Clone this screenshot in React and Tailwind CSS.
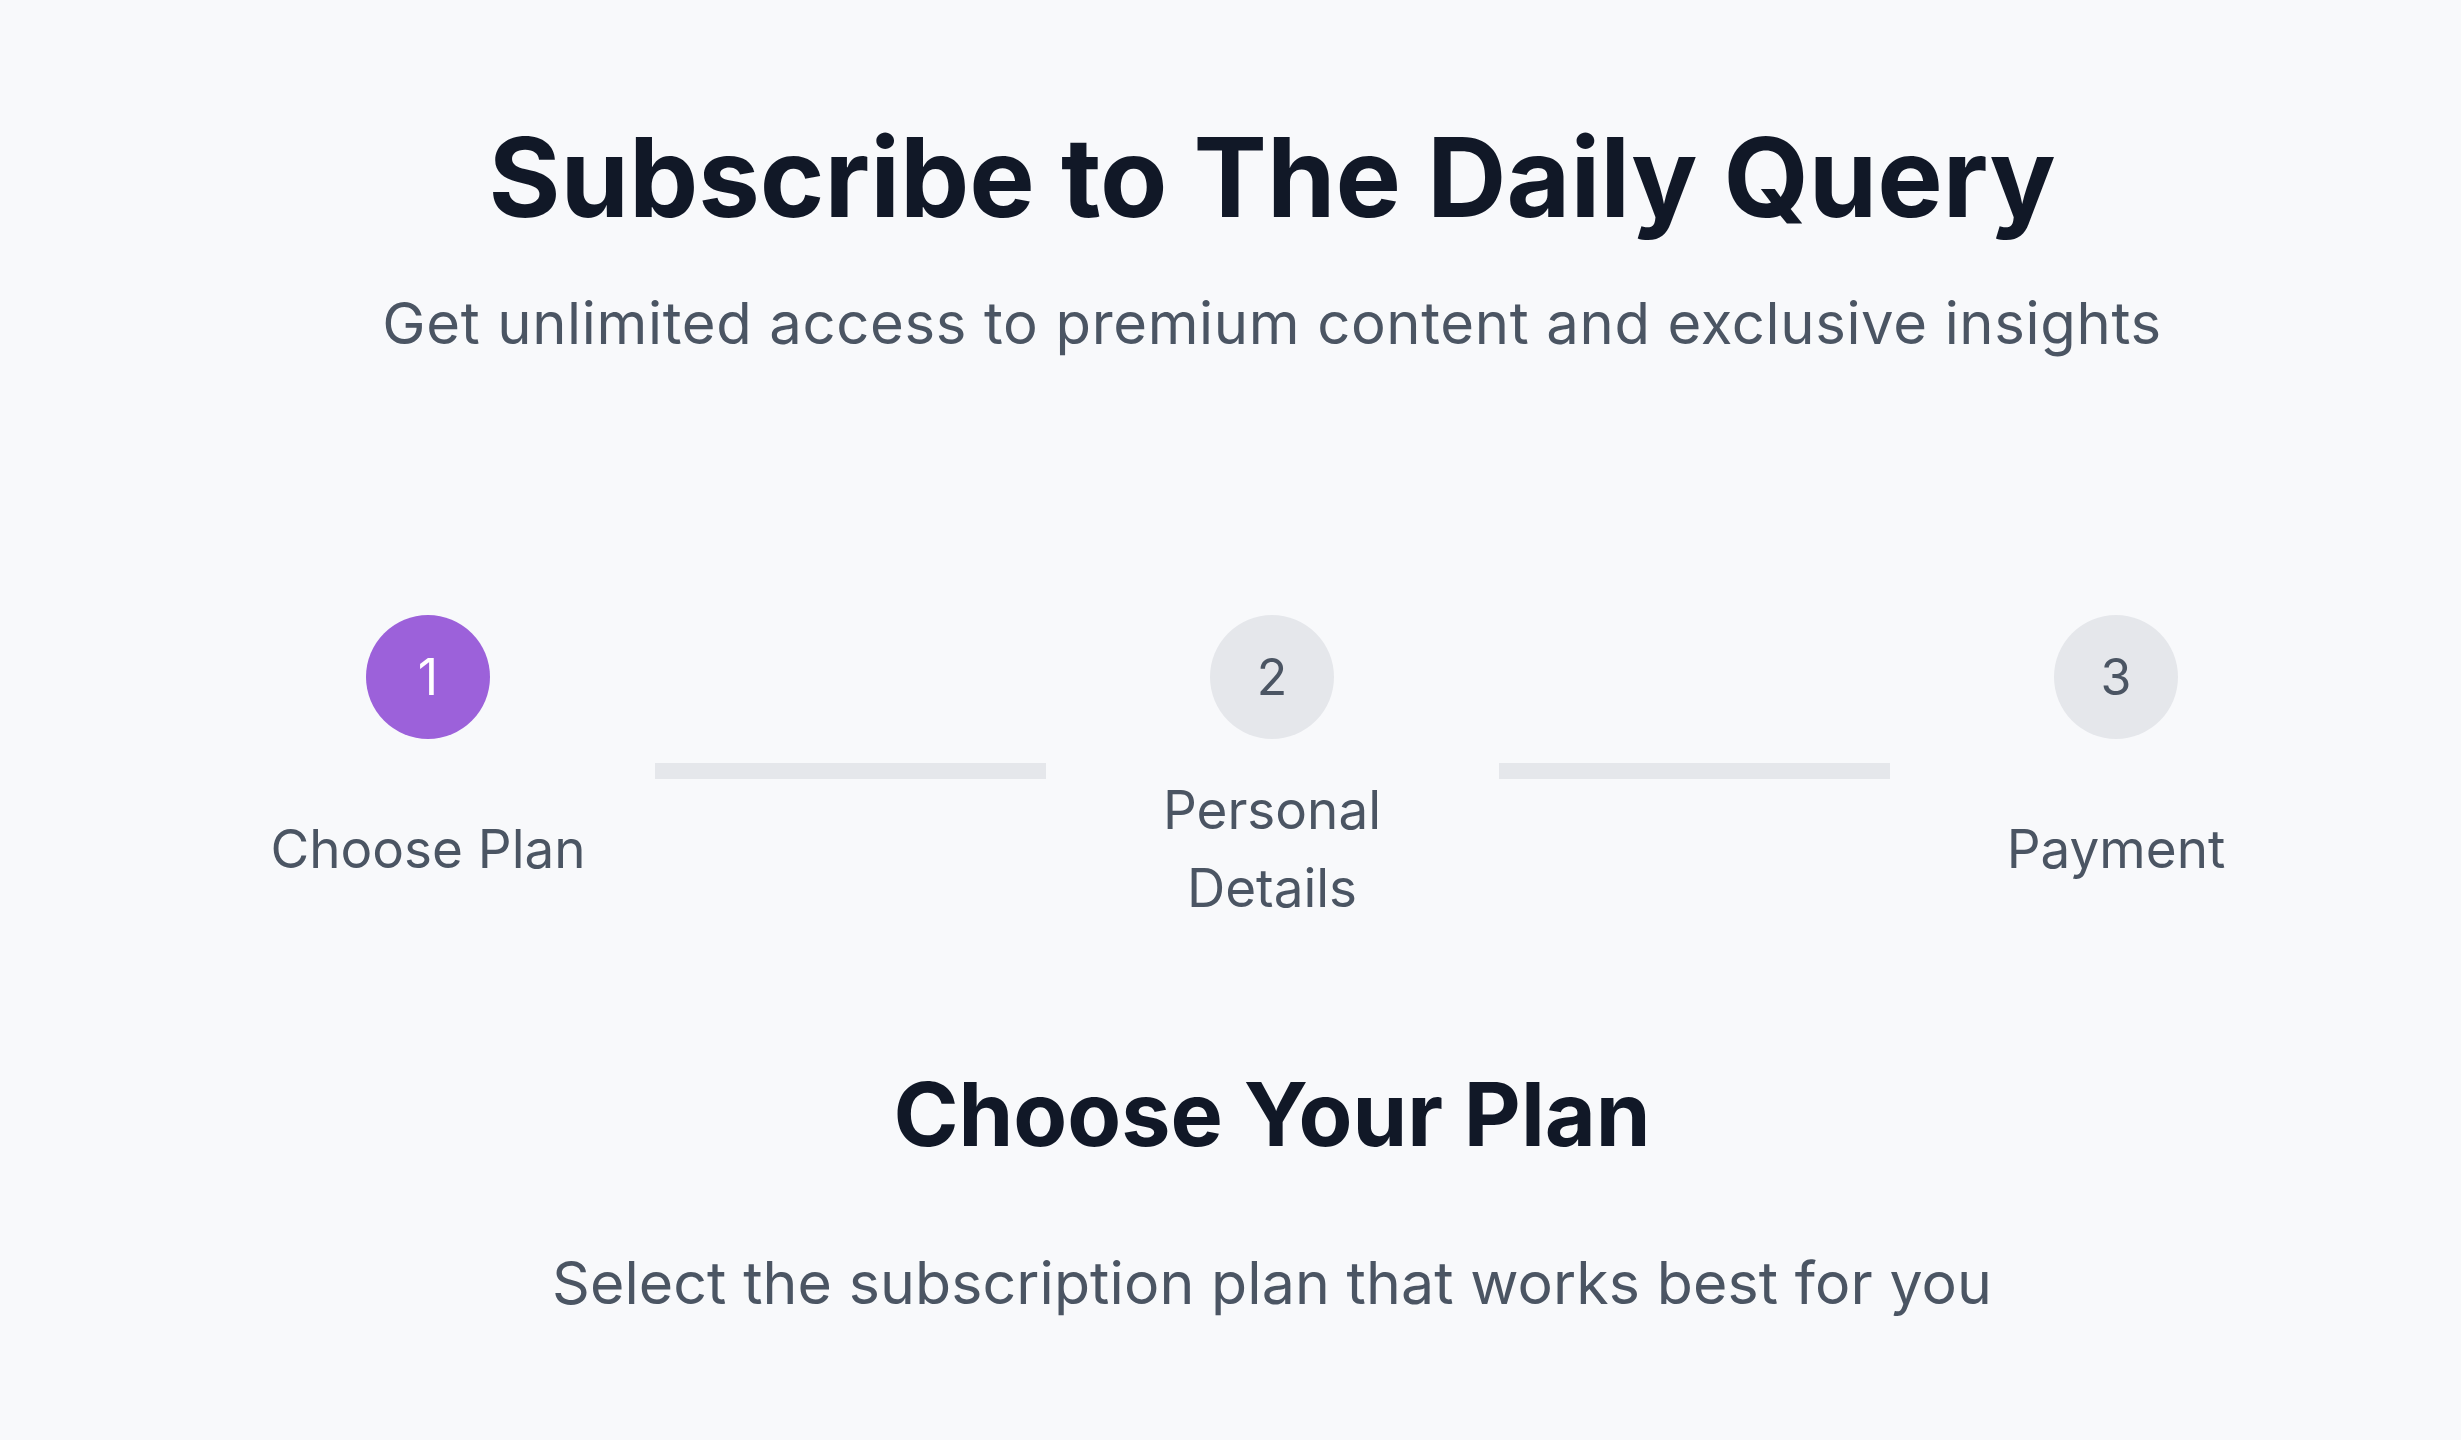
import React from "react";

const steps = [
  { n: "1", label: "Choose Plan", active: true },
  { n: "2", label: "Personal Details", active: false },
  { n: "3", label: "Payment", active: false },
];

function Step({ n, label, active }) {
  return (
    <div className="flex w-[361px] shrink-0 flex-col items-center">
      <div
        className={
          active
            ? "flex h-[124px] w-[124px] items-center justify-center rounded-full bg-[#9c61da] text-[50px] leading-none text-white"
            : "flex h-[124px] w-[124px] items-center justify-center rounded-full bg-[#e5e7eb] text-[50px] leading-none text-[#4b5563]"
        }
      >
        {n}
      </div>
      <div className="mt-[32px] flex h-[156px] items-center justify-center text-center text-[53px] leading-[78px] text-[#4b5563]">
        {label}
      </div>
    </div>
  );
}

export default function App() {
  return (
    <div
      className="min-h-screen w-full bg-[#f8f9fb] pl-[83px] pt-[122px]"
      style={{ fontFamily: "Inter, 'Noto Sans', sans-serif" }}
    >
      <div className="flex flex-col items-center">
        <h1 className="text-[110px] font-bold leading-[110px] text-[#111827]">
          Subscribe to The Daily Query
        </h1>
        <p className="mt-[48px] text-[58px] leading-[87px] tracking-[0.65px] text-[#4b5563]">
          Get unlimited access to premium content and exclusive insights
        </p>

        <div className="mt-[248px] flex items-center">
          <Step {...steps[0]} />
          <div className="mx-[46px] h-[16px] w-[391px] shrink-0 bg-[#e5e7eb]" />
          <Step {...steps[1]} />
          <div className="mx-[46px] h-[16px] w-[391px] shrink-0 bg-[#e5e7eb]" />
          <Step {...steps[2]} />
        </div>

        <h2 className="mt-[134px] text-[88px] font-bold leading-[106px] text-[#111827]">
          Choose Your Plan
        </h2>
        <p className="mt-[72px] text-[59px] leading-[88px] tracking-[0.1px] text-[#4b5563]">
          Select the subscription plan that works best for you
        </p>
      </div>
    </div>
  );
}
